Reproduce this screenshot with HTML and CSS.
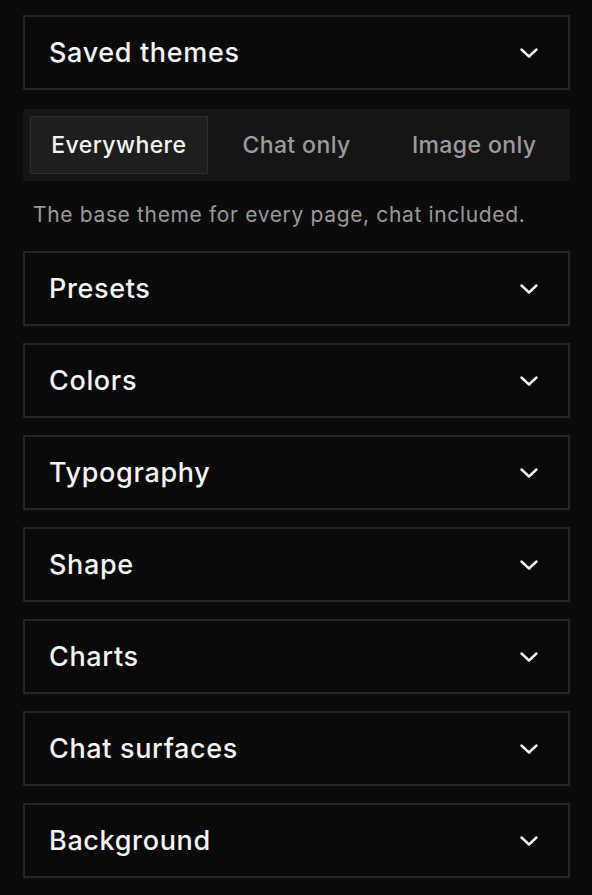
FILE: index.html
```html
<!DOCTYPE html>
<html>
<head>
<meta charset="utf-8">
<link rel="stylesheet" href="styles.css">
</head>
<body>
<div class="panel">
  <div class="card"><span class="title">Saved themes</span><svg class="chev" viewBox="0 0 18 10"><path d="M1.5 1.5 L9 8.5 L16.5 1.5"/></svg></div>
  <div class="tabs">
    <div class="tab active">Everywhere</div>
    <div class="tab">Chat only</div>
    <div class="tab">Image only</div>
  </div>
  <p class="desc">The base theme for every page, chat included.</p>
  <div class="list">
    <div class="card"><span class="title">Presets</span><svg class="chev" viewBox="0 0 18 10"><path d="M1.5 1.5 L9 8.5 L16.5 1.5"/></svg></div>
    <div class="card"><span class="title">Colors</span><svg class="chev" viewBox="0 0 18 10"><path d="M1.5 1.5 L9 8.5 L16.5 1.5"/></svg></div>
    <div class="card"><span class="title">Typography</span><svg class="chev" viewBox="0 0 18 10"><path d="M1.5 1.5 L9 8.5 L16.5 1.5"/></svg></div>
    <div class="card"><span class="title">Shape</span><svg class="chev" viewBox="0 0 18 10"><path d="M1.5 1.5 L9 8.5 L16.5 1.5"/></svg></div>
    <div class="card"><span class="title">Charts</span><svg class="chev" viewBox="0 0 18 10"><path d="M1.5 1.5 L9 8.5 L16.5 1.5"/></svg></div>
    <div class="card"><span class="title">Chat surfaces</span><svg class="chev" viewBox="0 0 18 10"><path d="M1.5 1.5 L9 8.5 L16.5 1.5"/></svg></div>
    <div class="card"><span class="title">Background</span><svg class="chev" viewBox="0 0 18 10"><path d="M1.5 1.5 L9 8.5 L16.5 1.5"/></svg></div>
  </div>
</div>
</body>
</html>
```
FILE: styles.css
```css
html, body {
  margin: 0;
  padding: 0;
  background: #0b0b0b;
  height: 100%;
}
body {
  font-family: Inter, "Liberation Sans", sans-serif;
  color: #f2f2f2;
}
.panel {
  padding: 15px 22px 0 23px;
  display: flex;
  flex-direction: column;
}
.card {
  box-sizing: border-box;
  height: 75px;
  border: 2px solid #252525;
  background: #0a0a0a;
  display: flex;
  align-items: center;
  justify-content: space-between;
  padding: 0 30px 0 24px;
}
.title {
  font-size: 27px;
  font-weight: 500;
  letter-spacing: 0.65px;
  color: #f4f4f4;
}
.chev {
  width: 18px;
  height: 10px;
  fill: none;
  stroke: #f4f4f4;
  stroke-width: 2.4;
  stroke-linecap: round;
  stroke-linejoin: round;
}
.tabs {
  margin-top: 19px;
  height: 72px;
  box-sizing: border-box;
  background: #151515;
  padding: 7px;
  display: grid;
  grid-template-columns: 1fr 1fr 1fr;
}
.tab {
  display: flex;
  align-items: center;
  justify-content: center;
  font-size: 23px;
  font-weight: 500;
  color: #9c9c9c;
  letter-spacing: 0.4px;
}
.tab.active {
  background: #1e1e1e;
  border: 1px solid #2d2d2d;
  color: #f4f4f4;
}
.desc {
  margin: 0;
  padding: 20px 0 0 10px;
  height: 48px;
  box-sizing: border-box;
  font-size: 21px;
  line-height: 28px;
  color: #9a9a9a;
  letter-spacing: 0.65px;
}
.list {
  margin-top: 22px;
  display: flex;
  flex-direction: column;
  gap: 17px;
}
```
